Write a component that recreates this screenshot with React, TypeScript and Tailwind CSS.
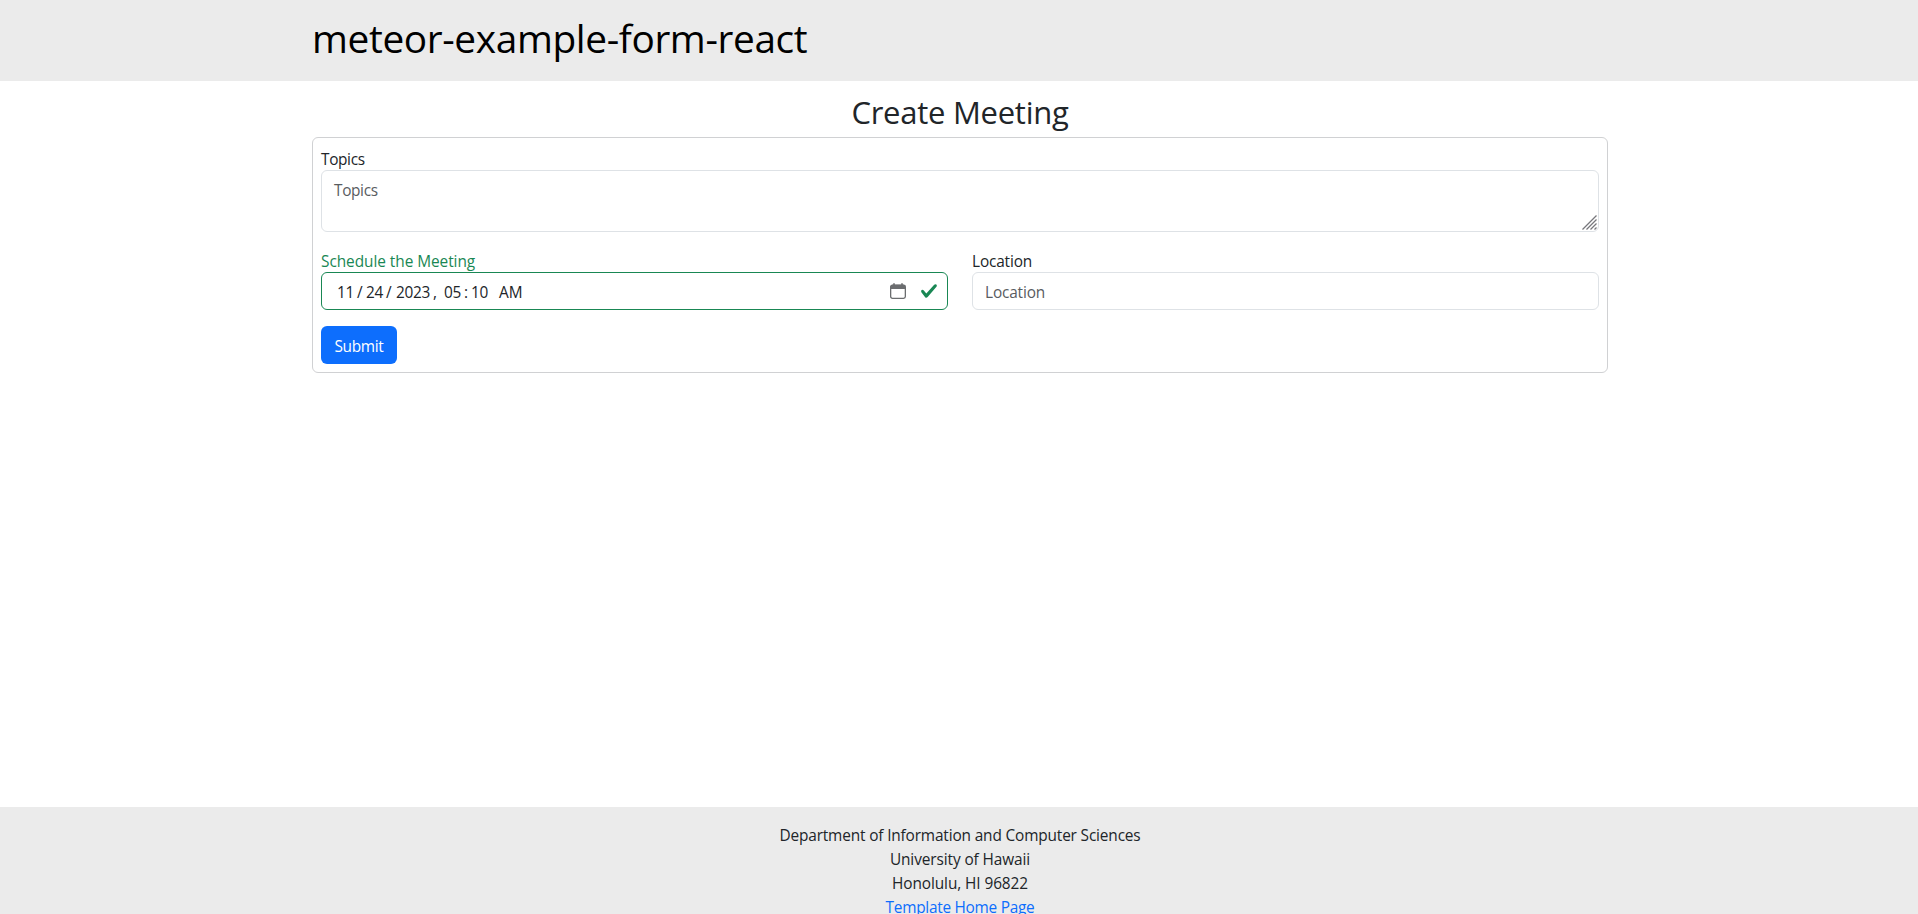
import type { ReactNode } from 'react';

function Label({ children, className }: { children: ReactNode; className: string }) {
  return <label className={`block h-6 pt-[2px] leading-6 ${className}`}>{children}</label>;
}

function CalendarIcon() {
  return (
    <svg width="16" height="16" viewBox="0 0 16 16" fill="none">
      <rect x="0.65" y="2.15" width="14.7" height="13.2" rx="1.8" stroke="#6b6d6f" strokeWidth="1.3" />
      <path d="M0.5 6V3.8Q0.5 1.8 2.5 1.8H13.5Q15.5 1.8 15.5 3.8V6Z" fill="#6b6d6f" />
      <path d="M4 0.3V3M12 0.3V3" stroke="#6b6d6f" strokeWidth="1.6" />
    </svg>
  );
}

function CheckIcon() {
  return (
    <svg width="18" height="18" viewBox="0 0 8 8" fill="#198754">
      <path d="M2.3 6.73.6 4.53c-.4-1.04.46-1.4 1.1-.8l1.1 1.4 3.4-3.8c.6-.63 1.6-.27 1.2.7l-4 4.6c-.43.5-.8.4-1.1.1z" />
    </svg>
  );
}

function ResizeGrip() {
  return (
    <svg width="15" height="15" viewBox="0 0 15 15" className="absolute right-px bottom-px" stroke="#77777c" strokeWidth="1.3">
      <path d="M0.5 14.5L14.5 0.5M4.5 14.5L14.5 4.5M8.5 14.5L14.5 8.5M12.5 14.5L14.5 12.5" />
    </svg>
  );
}

export default function App() {
  return (
    <div className="flex h-[914px] flex-col overflow-hidden bg-white font-['Open_Sans',sans-serif] text-[15.4px] leading-6 text-[#212529]">
      <header className="h-[81px] shrink-0 bg-[#ebebeb] pl-[2px]">
        <div className="mx-auto w-[1296px] pt-[8px]">
          <a className="block text-[38.8px] leading-[60px] tracking-[-0.375px] text-black">meteor-example-form-react</a>
        </div>
      </header>

      <main className="grow pt-[10px] pl-[2px]">
        <div className="mx-auto w-[1296px]">
          <h2 className="mb-2 h-[38px] pt-px text-center text-[31px] leading-[40px] tracking-[-0.26px]">Create Meeting</h2>
          <form className="rounded-md border border-[#d0d1d3] p-2">
            <Label className="tracking-[-0.35px]">Topics</Label>
            <div className="relative h-[62px] rounded-md border border-[#dee2e6] px-3 pt-[8px] tracking-[-0.35px] text-[#595c5f]">
              Topics
              <ResizeGrip />
            </div>

            <div className="mt-4 grid grid-cols-2 gap-6">
              <div>
                <Label className="tracking-[-0.05px] text-[#198754]">Schedule the Meeting</Label>
                <div className="flex h-[38px] items-center rounded-md border border-[#198754] pr-[9px] pl-[15px]">
                  <div className="flex grow pt-[4px] tracking-[-0.3px]">
                    <span className="w-[20px]">11</span>
                    <span className="w-[9px]">/</span>
                    <span className="w-[20px]">24</span>
                    <span className="w-[10px]">/</span>
                    <span className="w-[37px]">2023</span>
                    <span className="w-[11px]">,</span>
                    <span className="w-[20px]">05</span>
                    <span className="w-[7px]">:</span>
                    <span className="w-[28px]">10</span>
                    <span className="tracking-normal">AM</span>
                  </div>
                  <div className="flex items-center gap-[14px]">
                    <CalendarIcon />
                    <CheckIcon />
                  </div>
                </div>
              </div>
              <div>
                <Label className="tracking-[-0.15px]">Location</Label>
                <div className="h-[38px] rounded-md border border-[#dee2e6] px-3 pt-[8px] tracking-[-0.15px] text-[#595c5f]">
                  Location
                </div>
              </div>
            </div>

            <button
              type="button"
              className="mt-4 block h-[38px] w-[76px] rounded-md bg-[#0d6efd] pt-[4px] text-center tracking-[-0.3px] text-white"
            >
              Submit
            </button>
          </form>
        </div>
      </main>

      <footer className="h-[107px] shrink-0 bg-[#ebebeb] pt-[17px] pl-[2px] text-center">
        <p className="tracking-[-0.15px]">Department of Information and Computer Sciences</p>
        <p className="tracking-[-0.1px]">University of Hawaii</p>
        <p className="tracking-[-0.09px]">Honolulu, HI 96822</p>
        <a className="tracking-[-0.27px] text-[#0d6efd]">Template Home Page</a>
      </footer>
    </div>
  );
}
